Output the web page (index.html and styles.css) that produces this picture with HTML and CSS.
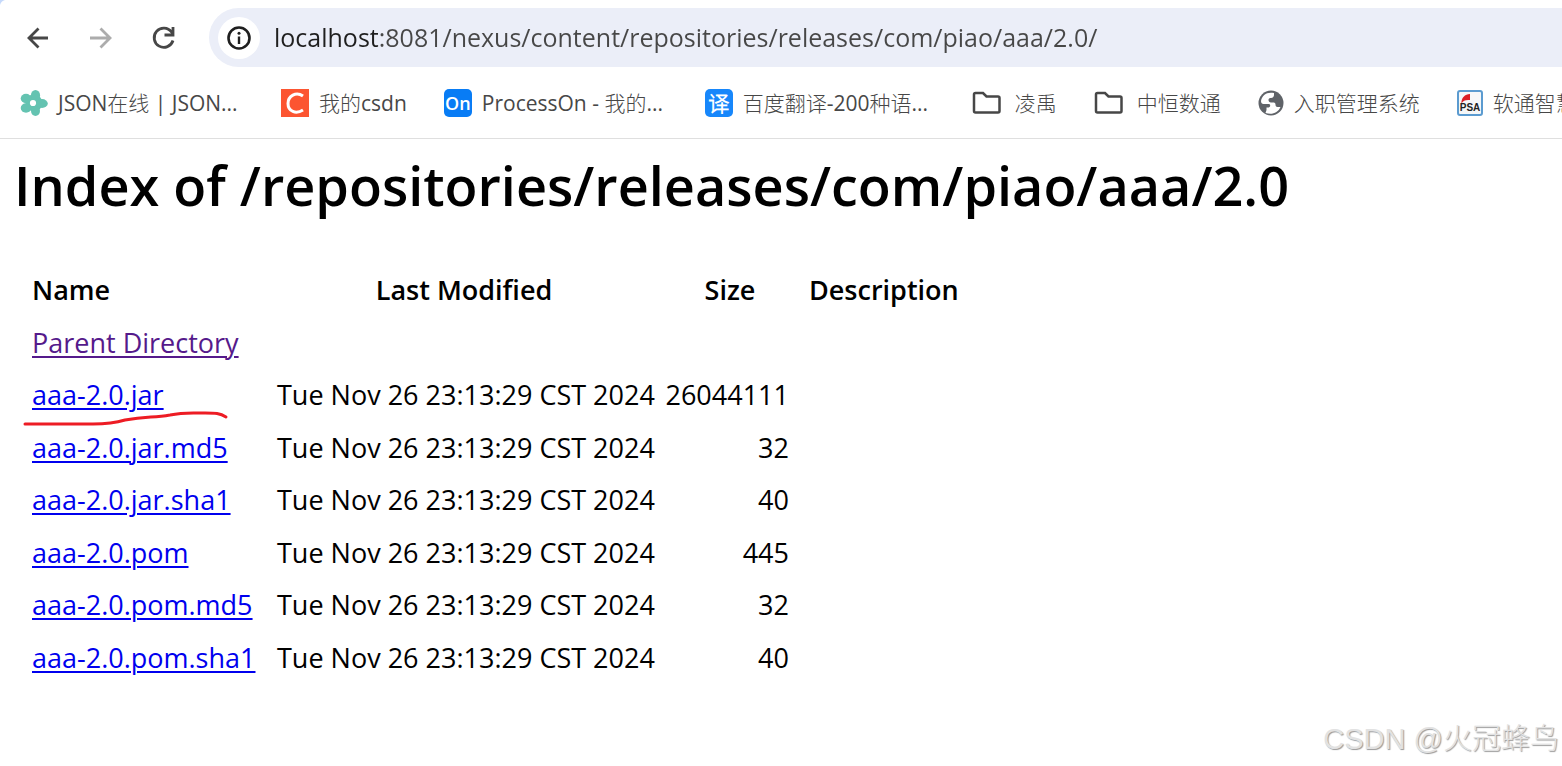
FILE: index.html
```html
<!DOCTYPE html>
<html lang="zh-CN">
<head>
  <meta charset="UTF-8">
  <meta name="viewport" content="width=device-width, initial-scale=1.0">
  <title>Index of /repositories/releases/com/piao/aaa/2.0</title>
  <link rel="stylesheet" href="styles.css">
</head>
<body>
  <header class="browser">
    <svg class="corner" width="5" height="5" viewBox="0 0 5 5"><path d="M0 0h5Q1 1 0 5z" fill="#c5d9fb"/></svg>
    <div class="toolbar">
      <button class="nav-button" type="button" aria-label="Back">
        <svg width="24" height="24" viewBox="0 0 24 24"><path d="M22 12H3M12.500 2.500L3 12l9.500 9.500" fill="none" stroke="#474747" stroke-width="2.800"/></svg>
      </button>
      <button class="nav-button" type="button" aria-label="Forward" disabled>
        <svg width="24" height="24" viewBox="0 0 24 24"><path d="M1 12h20M11.500 2.500L21 12l-9.500 9.500" fill="none" stroke="#acacac" stroke-width="2.800"/></svg>
      </button>
      <button class="nav-button" type="button" aria-label="Reload">
        <svg width="24" height="24" viewBox="0 0 24 24"><path d="M21 14.500A9.600 9.600 0 1 1 19.500 6L21 8M21 1v8h-8.500" fill="none" stroke="#474747" stroke-width="2.800"/></svg>
      </button>
      <div class="address-bar">
        <button class="site-info" type="button" aria-label="Site information">
          <svg width="24" height="24" viewBox="0 0 24 24"><circle cx="12" cy="12" r="10.500" fill="none" stroke="#1f1f1f" stroke-width="2.600"/><path d="M12 10.500V18" stroke="#1f1f1f" stroke-width="2.400"/><circle cx="12" cy="7.300" r="1.500" fill="#1f1f1f"/></svg>
        </button>
        <input class="address" type="text" aria-label="Address" value="localhost:8081/nexus/content/repositories/releases/com/piao/aaa/2.0/">
      </div>
    </div>
    <nav class="bookmarks">
      <a class="bookmark" href="#">
        <svg width="28" height="28" viewBox="0 0 28 28"><g fill="#64c3b1"><circle cx="14" cy="14" r="8.500"/><ellipse cx="15.500" cy="6.500" rx="4.600" ry="5.500"/><ellipse cx="22" cy="14.500" rx="5.800" ry="4.400"/><ellipse cx="15.500" cy="22" rx="4.500" ry="5"/><ellipse cx="6" cy="19" rx="5.300" ry="4.700"/><ellipse cx="6" cy="9.500" rx="5.300" ry="4.700"/></g><circle cx="13" cy="14" r="3.100" fill="#fff"/></svg>
        <span class="title">JSON在线 | JSON...</span>
      </a>
      <a class="bookmark" href="#">
        <svg width="28" height="28" viewBox="0 0 28 28"><path d="M0 0h28v28H0z" fill="#fc5531"/><path d="M22 7C15 2 7 7 7 14.500c0 8 8 11 15 6.500" fill="none" stroke="#fff" stroke-width="3"/></svg>
        <span>我的csdn</span>
      </a>
      <a class="bookmark" href="#">
        <span class="favicon">On</span>
        <span class="title">ProcessOn - 我的...</span>
      </a>
      <a class="bookmark" href="#">
        <span class="favicon favicon-translate">译</span>
        <span class="title title-wide">百度翻译-200种语...</span>
      </a>
      <button class="bookmark folder" type="button">
        <svg width="30" height="24" viewBox="0 0 30 24"><path d="M3.500 2h7.500l3.500 3.500H26q1.500 0 1.500 1.500v13q0 1.500-1.500 1.500H3.500Q2 21.500 2 20V3.500Q2 2 3.500 2z" fill="none" stroke="#474747" stroke-width="2.500"/></svg>
        <span>凌禹</span>
      </button>
      <button class="bookmark folder" type="button">
        <svg width="30" height="24" viewBox="0 0 30 24"><path d="M3.500 2h7.500l3.500 3.500H26q1.500 0 1.500 1.500v13q0 1.500-1.500 1.500H3.500Q2 21.500 2 20V3.500Q2 2 3.500 2z" fill="none" stroke="#474747" stroke-width="2.500"/></svg>
        <span>中恒数通</span>
      </button>
      <a class="bookmark" href="#">
        <svg width="26" height="28" viewBox="0 0 26 28"><circle cx="13" cy="14" r="12.500" fill="#5f6368"/><path d="M16 4C9 2.500 4 6 3 12c0 2 1 3 2.500 3h5c1.500 0 2 1 1.500 2.500-.5 1-1.500 1-3.500 1v2.500l-1 3C14 26 20 24 22.500 18h-3c-1.500 0-2-1-2-2.500 0-1.500-1-2-2.500-2h-2c-1.500 0-2.500-1-2.500-2.500 0-1.500 1-2 2.500-2 2 0 3-1.500 3-3z" fill="#fff"/></svg>
        <span>入职管理系统</span>
      </a>
      <a class="bookmark" href="#">
        <svg width="26" height="28" viewBox="0 0 26 28"><rect x="1" y="2" width="24" height="24" rx="2" fill="#f6f7f8" stroke="#5b9bd0" stroke-width="2"/><path d="M4.500 14.500C4 9 8 5 13 5v6C9 10.500 6 11.500 4.500 14.500z" fill="#dc1e25"/><text class="psa" x="13" y="22" text-anchor="middle">PSA</text></svg>
        <span>软通智慧</span>
      </a>
    </nav>
  </header>

  <main class="content">
    <h1>Index of /repositories/releases/com/piao/aaa/2.0</h1>
    <table class="listing">
      <thead>
        <tr><th class="name">Name</th><th class="modified">Last Modified</th><th class="size">Size</th><th>Description</th></tr>
      </thead>
      <tbody>
        <tr><td><a class="visited" href="#">Parent Directory</a></td><td></td><td></td><td></td></tr>
        <tr>
          <td class="marked">
            <a href="#">aaa-2.0.jar</a>
            <svg class="mark" width="206" height="16" viewBox="0 0 206 16"><path d="M2 13h68c14 0 22-1 32-4 22-4 28-2 45-5 14-3 20-2 35-2 10 0 15 0 21 4" fill="none" stroke="#ed1c24" stroke-width="3" stroke-linecap="round"/></svg>
          </td>
          <td class="date">Tue Nov 26 23:13:29 CST 2024</td><td class="number">26044111</td><td></td>
        </tr>
        <tr><td><a href="#">aaa-2.0.jar.md5</a></td><td class="date">Tue Nov 26 23:13:29 CST 2024</td><td class="number">32</td><td></td></tr>
        <tr><td><a href="#">aaa-2.0.jar.sha1</a></td><td class="date">Tue Nov 26 23:13:29 CST 2024</td><td class="number">40</td><td></td></tr>
        <tr><td><a href="#">aaa-2.0.pom</a></td><td class="date">Tue Nov 26 23:13:29 CST 2024</td><td class="number">445</td><td></td></tr>
        <tr><td><a href="#">aaa-2.0.pom.md5</a></td><td class="date">Tue Nov 26 23:13:29 CST 2024</td><td class="number">32</td><td></td></tr>
        <tr><td><a href="#">aaa-2.0.pom.sha1</a></td><td class="date">Tue Nov 26 23:13:29 CST 2024</td><td class="number">40</td><td></td></tr>
      </tbody>
    </table>
  </main>
  <div class="watermark">CSDN @火冠蜂鸟</div>
</body>
</html>
```

FILE: styles.css
```css
* {
  box-sizing: border-box;
}

body {
  margin: 0;
  position: relative;
  min-height: 100vh;
  overflow: hidden;
  background: #fff;
  color: #000;
  font-family: "Trebuchet MS", "Open Sans", "Noto Sans CJK SC", sans-serif;
  font-size: 27px;
}

button {
  padding: 0;
  border: none;
  background: none;
}

svg {
  display: block;
  flex: none;
}

/* Browser chrome */
.browser {
  border-bottom: 1px solid #dfdfdf;
  font-family: "Segoe UI", "Open Sans", "Noto Sans CJK SC Light", "Noto Sans CJK SC", sans-serif;
}

.corner {
  position: absolute;
  top: 0;
  left: 0;
}

.toolbar {
  display: flex;
  align-items: center;
  padding: 8px 0 0 26px;
}

.nav-button {
  width: 24px;
  height: 24px;
  margin-right: 39px;
}

.address-bar {
  display: flex;
  flex: 1;
  align-items: center;
  gap: 14px;
  height: 59px;
  margin-left: -6px;
  padding-left: 9px;
  border-radius: 30px 0 0 30px;
  background: #ebeef8;
}

.site-info {
  display: flex;
  align-items: center;
  justify-content: center;
  width: 42px;
  height: 42px;
  border-radius: 50%;
  background: #fff;
}

.address {
  flex: 1;
  height: 40px;
  padding: 0 0 2px;
  border: none;
  outline: none;
  /* the host is darker than the path */
  background: linear-gradient(90deg, #1f1f1f 106px, #474747 106px) text;
  color: transparent;
  font-family: inherit;
  font-size: 25px;
}

.bookmarks {
  display: flex;
  align-items: center;
  gap: 37px;
  height: 71px;
  padding-left: 20px;
  white-space: nowrap;
}

.bookmark {
  display: flex;
  flex: none;
  align-items: center;
  gap: 10px;
  color: #474747;
  font-family: inherit;
  font-size: 21px;
  line-height: 30px;
  text-decoration: none;
}

.folder {
  gap: 13px;
}

.title {
  width: 186px;
}

.title-wide {
  width: 192px;
}

.favicon {
  width: 28px;
  height: 28px;
  border-radius: 5px;
  background: #087cf5;
  color: #fff;
  font-size: 18px;
  font-weight: 600;
  line-height: 28px;
  text-align: center;
}

.favicon-translate {
  background: #1787fb;
  font-size: 21px;
}

.psa {
  fill: #222;
  font: bold 10px "Liberation Sans", sans-serif;
}

/* Directory listing */
.content {
  padding: 10px 14px 0;
}

h1 {
  margin: 0 0 42px;
  font-size: 54px;
  font-weight: 600;
  line-height: 72px;
}

.listing {
  border-collapse: collapse;
  margin-left: 8px;
  white-space: nowrap;
}

th,
td {
  height: 53px;
  padding: 0 10px;
  text-align: left;
  line-height: 32px;
}

tbody tr:nth-child(even) td {
  height: 52px;
}

th {
  font-weight: 600;
}

.name {
  width: 245px;
}

.modified {
  width: 394px;
  text-align: center;
}

.size {
  width: 138px;
  text-align: center;
}

.date {
  padding-right: 0;
}

.number {
  padding-left: 0;
  text-align: right;
}

.listing a {
  color: #0000ee;
  text-decoration-thickness: 2px;
  text-underline-offset: 3px;
}

.listing .visited {
  color: #551a8b;
}

.marked {
  position: relative;
}

.mark {
  position: absolute;
  left: 1px;
  top: 42px;
}

.watermark {
  position: absolute;
  right: 3px;
  bottom: 6px;
  color: #e2e2e2;
  font-family: "Liberation Sans", "Noto Sans CJK SC Light", "Noto Sans CJK SC", sans-serif;
  font-size: 29px;
  line-height: 42px;
  text-shadow: 1px 1px 1px #999;
}
```
